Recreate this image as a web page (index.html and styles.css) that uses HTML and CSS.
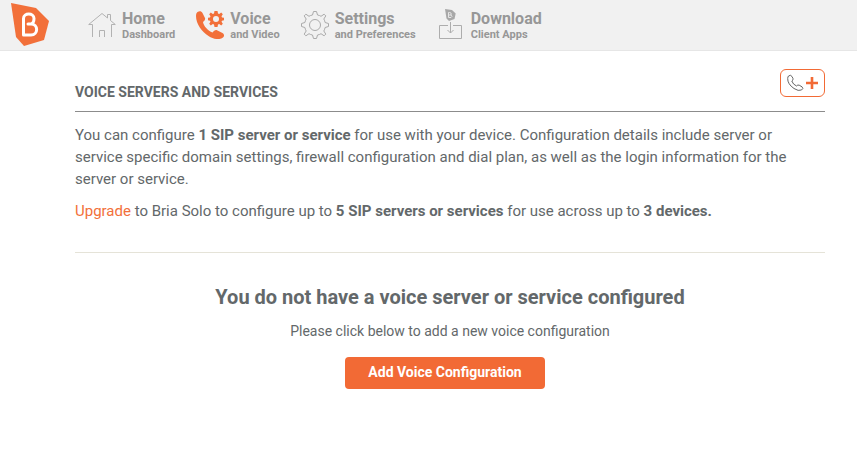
FILE: index.html
```html
<!DOCTYPE html>
<html lang="en">
<head>
    <meta charset="UTF-8">
    <meta name="viewport" content="width=device-width, initial-scale=1.0">
    <title>Voice Servers and Services</title>
    <link rel="stylesheet" href="styles.css">
</head>
<body>

    <!-- Top bar -->
    <header class="topbar">
        <a class="logo" href="#" aria-label="Bria">
            <svg width="38" height="44" viewBox="0 0 38 44">
                <path fill="#f2703a" d="M0 0 L25 5 L38 18 L33 37 L13 43 L5 34 Z"/>
                <path fill="none" stroke="#fff" stroke-width="3" stroke-linejoin="round" stroke-linecap="round" d="M17 21 H20 C27.500 21 27.500 32 20 32 H12.500 V15.500 C12.500 9.500 23 9.500 23 15.500 C23 19 22 20.500 20 21"/>
            </svg>
        </a>

        <nav class="nav">
            <a class="nav-item" href="#">
                <svg class="icon" viewBox="0 0 28 28" fill="none" stroke="#b2b2b2">
                    <path d="M4.500 26 V13.500 H.7 L14 2.500 L19.500 7 V3.500 H22.500 V9.500 L27.300 13.500 H23.500 V26 M11.500 26 V19.500 H16.500 V26"/>
                </svg>
                <span class="label">Home <small>Dashboard</small></span>
            </a>
            <a class="nav-item" href="#">
                <svg class="icon" viewBox="0 0 28 28" fill="#f2703a">
                    <path d="M1.500 1 C3.500 -.5 5.500 0 6.500 2 L9 7 C9.600 8.500 8.500 9.800 7 11 C7.500 15 12 19.800 16.500 21.500 C18 19.500 19.500 18.500 21 19.200 L26 21.700 C28.500 23 28.500 25 27 26.500 C24 29 18 28.600 12.500 25 C6 21 0 13 0 5 C0 3 .5 1.800 1.500 1 Z"/>
                    <path fill-rule="evenodd" d="M18.500 0 H21.500 L22 2.400 L23.200 2.900 L25.200 1.500 L26.800 3.200 L25.500 5.200 L26 6.400 L28 6.800 V9.200 L26 9.700 L25.500 10.800 L26.800 12.800 L25.200 14.500 L23.200 13.100 L22 13.600 L21.500 16 H18.500 L18 13.600 L16.800 13.100 L14.800 14.500 L13.200 12.800 L14.500 10.800 L14 9.700 L12 9.200 V6.800 L14 6.400 L14.500 5.200 L13.200 3.200 L14.800 1.500 L16.800 2.900 L18 2.400 Z M20 5 A3 3 0 1 0 20 11 A3 3 0 1 0 20 5 Z"/>
                </svg>
                <span class="label">Voice <small>and Video</small></span>
            </a>
            <a class="nav-item" href="#">
                <svg class="icon" viewBox="0 0 28 28" fill="none" stroke="#aaa" stroke-linejoin="round">
                    <path d="M12.500 .5 H15.500 L16.500 4 Q18.500 4.300 20 5.300 L23.100 3.200 L24.800 4.900 L22.800 8 Q23.800 9.700 24.100 11.500 L27.500 12.500 V15.500 L24.100 16.500 Q23.800 18.300 22.800 20 L24.800 23.100 L23.100 24.800 L20 22.700 Q18.500 23.700 16.500 24 L15.500 27.500 H12.500 L11.500 24 Q9.500 23.700 8 22.700 L4.900 24.800 L3.200 23.100 L5.200 20 Q4.200 18.300 3.900 16.500 L.5 15.500 V12.500 L3.900 11.500 Q4.200 9.700 5.200 8 L3.200 4.900 L4.900 3.200 L8 5.300 Q9.500 4.300 11.500 4 Z"/>
                    <circle cx="14" cy="14" r="5.500"/>
                </svg>
                <span class="label">Settings <small>and Preferences</small></span>
            </a>
            <a class="nav-item" href="#">
                <svg class="icon tall" viewBox="0 0 28 32" fill="none" stroke="#adadad">
                    <path fill="#a8a8a8" stroke="none" d="M8 0 L15 1 L18.700 4.500 L17.500 10 L12 12 L9.500 9.500 Z"/>
                    <path stroke="#e6e6e6" d="M11.500 3.500 V8.500 H14 Q16 7.500 14 6 H12 M14 6 Q15 3.500 12.500 3.500 H11.500"/>
                    <path d="M11 16.500 H2.500 V29.500 H24.500 V16.500 H16"/>
                    <path d="M13.500 13 V24 M10.500 21 L13.500 24 L16.500 21"/>
                </svg>
                <span class="label">Download <small>Client Apps</small></span>
            </a>
        </nav>
    </header>

    <!-- Voice servers -->
    <main class="content">
        <div class="title-bar">
            <h1>VOICE SERVERS AND SERVICES</h1>
            <button class="add-call" type="button" aria-label="Add voice configuration">
                <svg width="33" height="18" viewBox="0 0 33 18" fill="none">
                    <path stroke="#666" d="M2.500 2 Q4.500 .3 6 2.500 L7 4.500 Q7.500 6 5.800 7 Q7 10.500 10.500 12 Q11.800 10.500 13.200 11.200 L16 12.800 Q18 14.500 15.500 16 Q12.500 17.500 8 14.500 Q1.500 10 1.700 4.500 Q1.800 2.800 2.500 2 Z"/>
                    <path stroke="#f26a35" stroke-width="2.600" d="M20 9 H32 M26 3 V15"/>
                </svg>
            </button>
        </div>

        <div class="intro">
            <p>You can configure <strong>1 SIP server or service</strong> for use with your device. Configuration details include server or service specific domain settings, firewall configuration and dial plan, as well as the login information for the server or service.</p>
            <p><a href="#">Upgrade</a> to Bria Solo to configure up to <strong>5 SIP servers or services</strong> for use across up to <strong>3 devices.</strong></p>
        </div>

        <section class="empty">
            <h2>You do not have a voice server or service configured</h2>
            <p>Please click below to add a new voice configuration</p>
            <button class="add-config" type="button">Add Voice Configuration</button>
        </section>
    </main>

</body>
</html>
```
FILE: styles.css
```css
* { box-sizing: border-box; }
body { margin: 0; background: #fff; color: #63686a; font-family: Roboto, Arial, sans-serif; font-size: 14px; line-height: 20px; }
h1, h2, p { margin: 0; }
a { color: #f2703a; text-decoration: none; }
button { font-family: inherit; cursor: pointer; }
svg { display: block; flex: none; }

.topbar { display: flex; align-items: center; height: 51px; padding-left: 11px; background: #f1f1f1; border-bottom: 1px solid #e6e6e6; }
.nav { display: flex; gap: 21px; margin-left: 39px; }
.nav-item { display: flex; align-items: center; gap: 6px; color: #979797; }
.icon { width: 28px; height: 28px; }
.icon.tall { height: 32px; }
.label { padding-top: 2px; font-size: 16px; font-weight: bold; line-height: 18px; }
.label small { display: block; font-size: 11px; line-height: 14px; }

.content { padding: 18px 32px 24px 75px; }
.title-bar { display: flex; align-items: flex-start; justify-content: space-between; height: 43px; border-bottom: 1px solid #8c8c8c; }
.title-bar h1 { padding-top: 13px; font-size: 14px; line-height: 20px; }
.add-call { display: flex; align-items: center; justify-content: center; width: 45px; height: 28px; padding: 0; background: #fff; border: 1px solid #f26a35; border-radius: 6px; }

.intro { padding: 12px 16px 30px 0; border-bottom: 1px solid #e5e3d8; font-size: 15px; line-height: 22px; }
.intro p + p { margin-top: 10px; }

.empty { padding-top: 32px; text-align: center; }
.empty h2 { font-size: 20px; line-height: 24px; }
.empty p { margin-top: 12px; }
.add-config { width: 200px; height: 32px; margin: 16px 10px 0 0; padding: 0 0 2px; background: #f26a35; color: #fff; border: none; border-radius: 4px; font-size: 14px; font-weight: bold; }

@media (max-width: 600px) {
    .topbar { height: auto; padding: 6px 11px; }
    .nav { flex-wrap: wrap; gap: 12px; margin-left: 16px; }
    .content { padding: 18px 20px 24px; }
}
```
